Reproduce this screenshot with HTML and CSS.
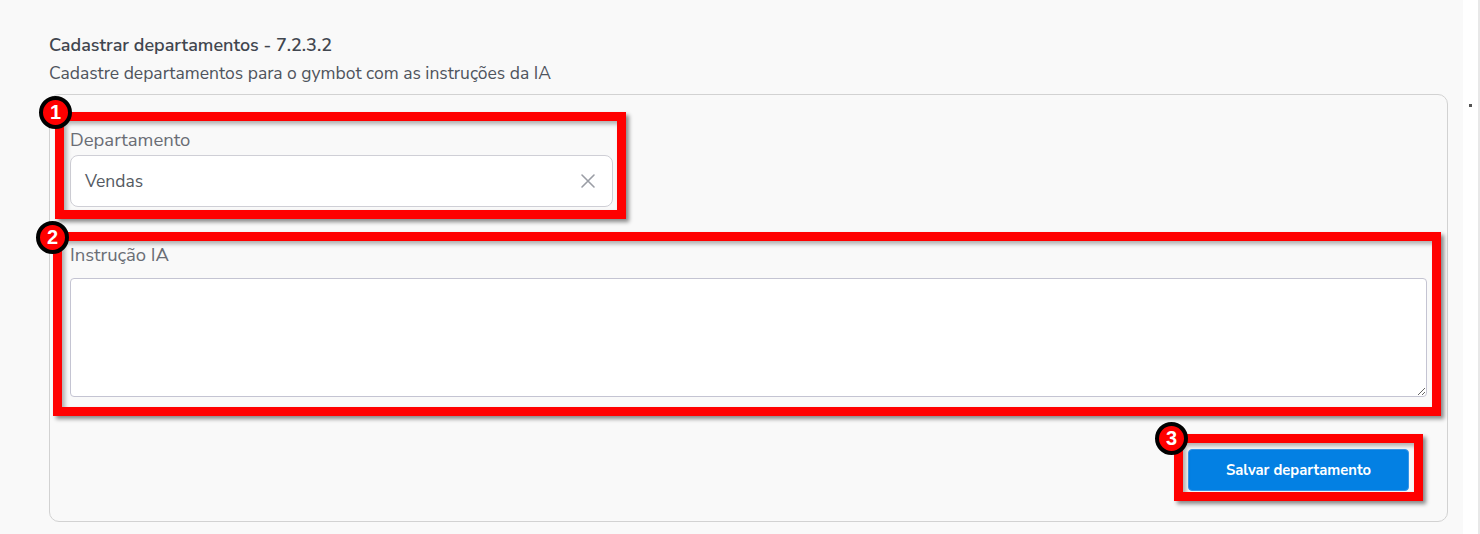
FILE: index.html
```html
<!DOCTYPE html>
<html lang="pt-BR">
<head>
  <meta charset="UTF-8">
  <meta name="viewport" content="width=device-width, initial-scale=1.0">
  <title>Cadastrar departamentos</title>
  <link rel="stylesheet" href="styles.css">
</head>
<body>
  <div class="page">
    <main class="content">
      <h1 class="title">Cadastrar departamentos - 7.2.3.2</h1>
      <p class="subtitle">Cadastre departamentos para o gymbot com as instruções da IA</p>

      <section class="card">
        <div class="field field-dept">
          <label class="field-label">Departamento</label>
          <div class="input-box">
            <span class="input-value">Vendas</span>
            <svg class="clear-icon" width="16" height="16" viewBox="0 0 16 16">
              <path d="M2 2 L14 14 M14 2 L2 14" stroke="#9a9da5" stroke-width="1.6" fill="none" stroke-linecap="round"/>
            </svg>
          </div>
        </div>

        <div class="field field-ia">
          <label class="field-label">Instrução IA</label>
          <textarea class="textarea"></textarea>
        </div>

        <div class="actions">
          <button class="save-button">Salvar departamento</button>
        </div>

        <!-- marcações do tutorial -->
        <div class="mark mark-1"><span class="badge">1</span></div>
        <div class="mark mark-2"><span class="badge">2</span></div>
        <div class="mark mark-3"><span class="badge">3</span></div>
      </section>
    </main>
    <aside class="side">
      <span class="side-dot"></span>
    </aside>
  </div>
</body>
</html>
```

FILE: styles.css
```css
* {
  margin: 0;
  padding: 0;
  box-sizing: border-box;
}

body {
  font-family: "Nunito Sans", "Open Sans", "Noto Sans", sans-serif;
  background-color: #f9f9f9;
  height: 534px;
  overflow: hidden;
}

.page {
  display: flex;
  height: 534px;
}

.content {
  flex: 1;
  padding: 34px 15px 0 49px;
}

.title {
  font-size: 18px;
  line-height: 22px;
  font-weight: 600;
  color: #41464f;
}

.subtitle {
  margin-top: 6px;
  font-size: 17.5px;
  line-height: 22px;
  color: #4f545d;
}

.card {
  position: relative;
  margin-top: 10px;
  height: 428px;
  padding: 33px 20px 0 20px;
  border: 1px solid #d2d2d2;
  border-radius: 10px;
  background-color: #f9f9f9;
}

.field-label {
  display: block;
  font-size: 18.5px;
  line-height: 24px;
  color: #6a6d75;
}

.input-box {
  display: flex;
  align-items: center;
  justify-content: space-between;
  width: 543px;
  height: 52px;
  margin-top: 3px;
  padding: 0 16px 0 14px;
  background-color: #fff;
  border: 1px solid #cfcfd6;
  border-radius: 8px;
}

.input-value {
  font-size: 17.5px;
  color: #555a62;
}

.field-ia {
  margin-top: 36px;
}

.textarea {
  display: block;
  width: 100%;
  height: 119px;
  margin-top: 11px;
  border: 1px solid #c4c4d2;
  border-radius: 4px;
  background-color: #fff;
  font-family: inherit;
}

.actions {
  display: flex;
  justify-content: flex-end;
  margin-top: 52px;
  padding-right: 18px;
}

.save-button {
  width: 221px;
  height: 42px;
  border: 1px solid #3a96e8;
  border-radius: 4px;
  background-color: #0380e3;
  color: #fff;
  font-family: inherit;
  font-size: 14.8px;
  font-weight: 700;
}

/* marcações vermelhas por cima do formulário */
.mark {
  position: absolute;
  border: 9px solid #ff0000;
  box-shadow: 3px 3px 4px rgba(0, 0, 0, 0.45), inset 3px 3px 4px rgba(0, 0, 0, 0.3);
  pointer-events: none;
}

.mark-1 {
  left: 5px;
  top: 17px;
  width: 571px;
  height: 107px;
}

.mark-2 {
  left: 3px;
  top: 137px;
  width: 1388px;
  height: 184px;
}

.mark-3 {
  left: 1124px;
  top: 339px;
  width: 249px;
  height: 67px;
}

.badge {
  position: absolute;
  left: -25px;
  top: -25px;
  width: 33px;
  height: 33px;
  border: 4px solid #000;
  border-radius: 50%;
  background-color: #ff0000;
  color: #fff;
  font-family: "Liberation Sans", Arial, sans-serif;
  font-size: 20px;
  font-weight: 700;
  line-height: 25px;
  text-align: center;
}

.mark-2 .badge {
  top: -20px;
  left: -26px;
}

.mark-3 .badge {
  top: -21px;
  left: -28px;
}

.side {
  position: relative;
  width: 17px;
  background-color: #fff;
  border-right: 2px solid #e8e8e8;
}

.side-dot {
  position: absolute;
  left: 6px;
  top: 104px;
  width: 3px;
  height: 3px;
  background-color: #555;
}
```
